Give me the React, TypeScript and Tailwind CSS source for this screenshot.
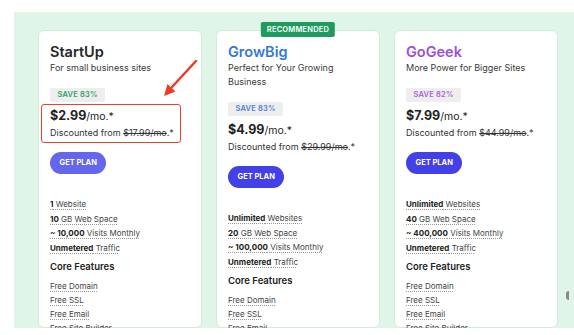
import React from "react";

type Feat = { b: string; n: string };

type Plan = {
  name: string;
  nameColor: string;
  sub: string;
  save: string;
  saveColor: string;
  price: string;
  was: string;
  btn: string;
  feats: Feat[];
  rec?: boolean;
};

const plans: Plan[] = [
  {
    name: "StartUp",
    nameColor: "text-[#262626]",
    sub: "For small business sites",
    save: "SAVE 83%",
    saveColor: "text-[#2f9e6c]",
    price: "$2.99",
    was: "$17.99/mo",
    btn: "bg-[#6466ee]",
    feats: [
      { b: "1", n: " Website" },
      { b: "10", n: " GB Web Space" },
      { b: "~ 10,000", n: " Visits Monthly" },
      { b: "Unmetered", n: " Traffic" },
    ],
  },
  {
    name: "GrowBig",
    nameColor: "text-[#3677dc]",
    sub: "Perfect for Your Growing Business",
    save: "SAVE 83%",
    saveColor: "text-[#4a7fe0]",
    price: "$4.99",
    was: "$29.99/mo",
    btn: "bg-[#4340e8]",
    rec: true,
    feats: [
      { b: "Unlimited", n: " Websites" },
      { b: "20", n: " GB Web Space" },
      { b: "~ 100,000", n: " Visits Monthly" },
      { b: "Unmetered", n: " Traffic" },
    ],
  },
  {
    name: "GoGeek",
    nameColor: "text-[#9c50d8]",
    sub: "More Power for Bigger Sites",
    save: "SAVE 82%",
    saveColor: "text-[#a862d8]",
    price: "$7.99",
    was: "$44.99/mo",
    btn: "bg-[#4340e8]",
    feats: [
      { b: "Unlimited", n: " Websites" },
      { b: "40", n: " GB Web Space" },
      { b: "~ 400,000", n: " Visits Monthly" },
      { b: "Unmetered", n: " Traffic" },
    ],
  },
];

const core = ["Free Domain", "Free SSL", "Free Email", "Free Site Builder"];

function Card({ p }: { p: Plan }) {
  return (
    <div className="relative w-[164px] shrink-0 bg-white rounded-[6px] border border-[#d4e9dd] px-[11px] pt-[11px] flex flex-col items-start">
      {p.rec && (
        <div className="absolute top-[-9px] left-1/2 -translate-x-1/2 h-[15px] px-[6px] bg-[#1f9b60] rounded-[2px] text-white text-[7.5px] font-semibold leading-[15px] tracking-[0.2px]">
          RECOMMENDED
        </div>
      )}
      <div className={`text-[14.5px] leading-[19px] font-semibold ${p.nameColor}`}>{p.name}</div>
      <div className="text-[9px] leading-[14px] text-[#3a3a3a]">{p.sub}</div>
      <div className={`mt-[13px] h-[14px] px-[7.5px] bg-[#eeeeee] rounded-[2px] text-[7.5px] leading-[14px] font-semibold tracking-[0.2px] ${p.saveColor}`}>
        {p.save}
      </div>
      <div className="mt-[3px] leading-[19px] text-[#222]">
        <span className="text-[12.5px] font-bold">{p.price}</span>
        <span className="text-[10.5px]">/mo.*</span>
      </div>
      <div className="text-[9px] leading-[14px] text-[#333]">
        Discounted from <span className="line-through">{p.was}</span>.*
      </div>
      <div className={`mt-[12px] h-[22px] px-[9.5px] rounded-full text-white text-[7.5px] font-bold leading-[22px] ${p.btn}`}>
        GET PLAN
      </div>
      <div className="mt-[11px] h-px w-full bg-[#ececec]" />
      <div className="mt-[12px] flex flex-col text-[8px] leading-[14.5px] text-[#444]">
        {p.feats.map((f, i) => (
          <div key={i}>
            <span className="underline decoration-dotted decoration-[#999] underline-offset-2">
              <span className="font-bold text-[#222]">{f.b}</span>
              {f.n}
            </span>
          </div>
        ))}
      </div>
      <div className="mt-[4px] text-[9.5px] leading-[16px] font-semibold text-[#222]">Core Features</div>
      <div className="mt-[4px] flex flex-col text-[8px] leading-[14px] text-[#444]">
        {core.map((c, i) => (
          <div key={i}>
            <span className="underline decoration-dotted decoration-[#999] underline-offset-2">{c}</span>
          </div>
        ))}
      </div>
    </div>
  );
}

export default function App() {
  return (
    <div className="relative w-[574px] h-[335px] overflow-hidden bg-white font-['Inter',sans-serif]">
      <div className="mt-[12px] ml-[14px] h-[316px] overflow-hidden bg-[#dff5e8] pt-[18px] pl-[24px] flex gap-[14px]">
        {plans.map((p) => (
          <Card key={p.name} p={p} />
        ))}
      </div>
      <div className="absolute left-[41px] top-[104px] w-[140px] h-[39px] border-[1.5px] border-[#f0402b] rounded-[3px]" />
      <svg className="absolute left-0 top-0" width="574" height="335" viewBox="0 0 574 335">
        <line x1="196" y1="61" x2="172" y2="87" stroke="#f03a25" strokeWidth="2.5" strokeLinecap="round" />
        <polygon points="164,96 175.5,91.5 167.5,84" fill="#f03a25" />
      </svg>
      <div className="absolute left-[566px] top-[291px] w-[3px] h-[9px] rounded-l-full bg-[#888]" />
    </div>
  );
}
